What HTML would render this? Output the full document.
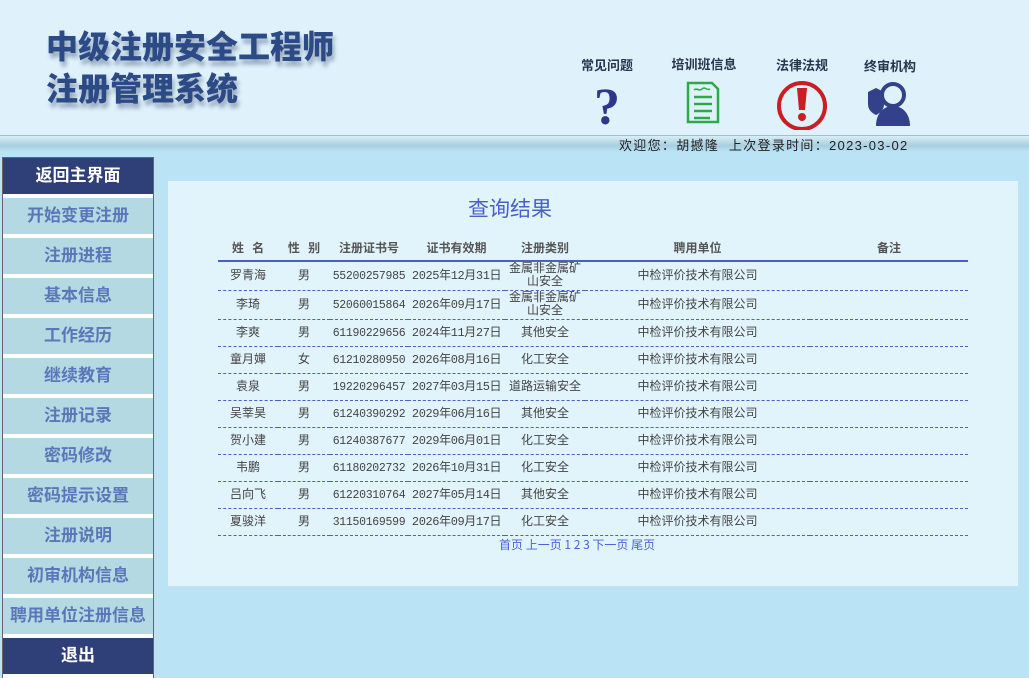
<!DOCTYPE html>
<html><head><meta charset="utf-8"><style>
body{margin:0;width:1029px;height:672px;overflow:hidden;background:#bae4f5;font-family:"Liberation Sans","Noto Sans CJK SC",sans-serif;position:relative}
.hdr{position:absolute;left:0;top:0;width:1029px;height:135px;background:#dff2fc;border-bottom:1px solid #9cc4d0}
.band{position:absolute;left:0;top:136px;width:1029px;height:16px;background:linear-gradient(#d9eef7,#a9cfdf 60%,#bae4f5)}
.title{position:absolute;left:46px;font-size:32px;font-weight:900;color:#2c4a86;letter-spacing:0;text-shadow:2px 5px 4px rgba(60,80,110,.45);font-family:"WenQuanYi Zen Hei","Noto Sans CJK SC",sans-serif}
.nav{position:absolute;font-size:13px;font-weight:bold;color:#2a3550;width:80px;text-align:center}
.welcome{position:absolute;left:619px;top:135px;font-size:13px;color:#222;letter-spacing:1.3px}
.side{position:absolute;left:2px;top:157px;width:150px;border:1px solid #666;border-bottom:none;background:#fff}
.side div{height:36px;line-height:36px;margin-bottom:4px;background:#b5d9e3;color:#5a78b8;font-weight:bold;font-size:17px;text-align:center}
.side div.d{background:#2f3f78;color:#fff}
.panel{position:absolute;left:168px;top:181px;width:850px;height:405px;background:#e2f4fb}
.qt{position:absolute;left:468px;top:193px;font-size:21px;color:#4a5fc8}
table{position:absolute;left:218px;top:235px;width:750px;border-collapse:collapse;table-layout:fixed;font-size:12px;color:#444;font-family:"Liberation Mono","WenQuanYi Zen Hei","Noto Sans CJK SC",monospace}
th{font-weight:bold;color:#555;height:25px;border-bottom:2px solid #4a5fc8;font-size:12px;font-family:"WenQuanYi Zen Hei","Noto Sans CJK SC",sans-serif;padding:0}
td{text-align:center;border-bottom:1px dashed #4a5fc8;height:26px;padding:0;line-height:13px;white-space:nowrap;overflow:hidden}
td:nth-child(3){font-size:11.5px;letter-spacing:-.3px}
td:nth-child(4){letter-spacing:-.4px}
tr.t td{height:28px}
.pg{position:absolute;left:499px;top:536px;font-size:12px;color:#4a5fe0;font-family:"WenQuanYi Zen Hei","Noto Sans CJK SC",sans-serif}
</style></head><body>
<div class="hdr"></div><div class="band"></div>
<div class="title" style="top:22px">中级注册安全工程师</div>
<div class="title" style="top:64px">注册管理系统</div>
<div class="nav" style="left:567px;top:55px">常见问题</div>
<div class="nav" style="left:664px;top:54px">培训班信息</div>
<div class="nav" style="left:762px;top:55px">法律法规</div>
<div class="nav" style="left:850px;top:56px">终审机构</div>
<svg style="position:absolute;left:570px;top:75px" width="360" height="55">
<text x="37" y="49" font-size="52" font-family="Liberation Serif" font-weight="bold" fill="#32348a" text-anchor="middle">?</text>
<g stroke="#2ea84a" stroke-width="2.5" fill="none"><path d="M118 8h24l6 6v33h-30z"/><path d="M124 22h18M124 29h18M124 36h18M124 43h16"/><path d="M124 15c3-3 5 2 8-1s5 2 8 0" stroke-width="1.5"/></g>
<circle cx="232" cy="31" r="23" fill="none" stroke="#c81e24" stroke-width="4"/><path d="M227 13h10l-2 22h-6z" fill="#c81e24"/><circle cx="232" cy="42" r="4" fill="#c81e24"/>
<g fill="#33408a"><circle cx="323" cy="20" r="11" fill="none" stroke="#33408a" stroke-width="4"/><path d="M306 51c0-13 8-20 17-20s17 7 17 20z"/><path d="M298 17l8-4 8 4v12c0 6-4 9-8 11-4-2-8-5-8-11z"/></g>
</svg>
<div class="welcome">欢迎您：胡撼隆&nbsp;&nbsp;上次登录时间：2023-03-02</div>
<div class="side">
<div class="d">返回主界面</div><div>开始变更注册</div><div>注册进程</div><div>基本信息</div><div>工作经历</div><div>继续教育</div><div>注册记录</div><div>密码修改</div><div>密码提示设置</div><div>注册说明</div><div>初审机构信息</div><div>聘用单位注册信息</div><div class="d">退出</div>
</div>
<div class="panel"></div>
<div class="qt">查询结果</div>
<table>
<colgroup><col style="width:60px"><col style="width:52px"><col style="width:78px"><col style="width:97px"><col style="width:80px"><col style="width:225px"><col></colgroup>
<tr><th>姓&nbsp;&nbsp;&nbsp;名</th><th>性&nbsp;&nbsp;&nbsp;别</th><th>注册证书号</th><th>证书有效期</th><th>注册类别</th><th>聘用单位</th><th>备注</th></tr>
<tr class="t"><td>罗青海</td><td>男</td><td>55200257985</td><td>2025年12月31日</td><td>金属非金属矿<br>山安全</td><td>中检评价技术有限公司</td><td></td></tr>
<tr class="t"><td>李琦</td><td>男</td><td>52060015864</td><td>2026年09月17日</td><td>金属非金属矿<br>山安全</td><td>中检评价技术有限公司</td><td></td></tr>
<tr><td>李爽</td><td>男</td><td>61190229656</td><td>2024年11月27日</td><td>其他安全</td><td>中检评价技术有限公司</td><td></td></tr>
<tr><td>童月嬋</td><td>女</td><td>61210280950</td><td>2026年08月16日</td><td>化工安全</td><td>中检评价技术有限公司</td><td></td></tr>
<tr><td>袁泉</td><td>男</td><td>19220296457</td><td>2027年03月15日</td><td>道路运输安全</td><td>中检评价技术有限公司</td><td></td></tr>
<tr><td>吴莘昊</td><td>男</td><td>61240390292</td><td>2029年06月16日</td><td>其他安全</td><td>中检评价技术有限公司</td><td></td></tr>
<tr><td>贺小建</td><td>男</td><td>61240387677</td><td>2029年06月01日</td><td>化工安全</td><td>中检评价技术有限公司</td><td></td></tr>
<tr><td>韦鹏</td><td>男</td><td>61180202732</td><td>2026年10月31日</td><td>化工安全</td><td>中检评价技术有限公司</td><td></td></tr>
<tr><td>吕向飞</td><td>男</td><td>61220310764</td><td>2027年05月14日</td><td>其他安全</td><td>中检评价技术有限公司</td><td></td></tr>
<tr><td>夏骏洋</td><td>男</td><td>31150169599</td><td>2026年09月17日</td><td>化工安全</td><td>中检评价技术有限公司</td><td></td></tr>
</table>
<div class="pg">首页 上一页 1 2 3 下一页 尾页</div>
</body></html>
